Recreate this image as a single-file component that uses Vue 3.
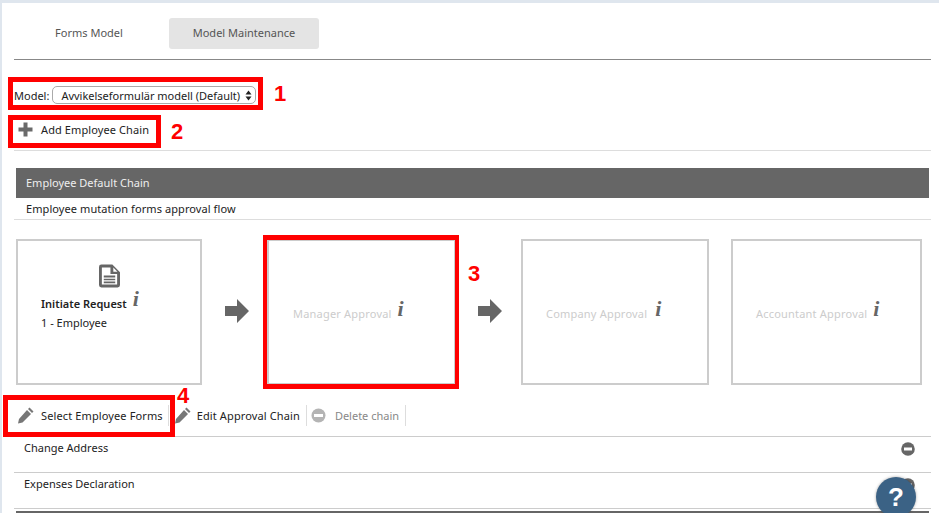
<script setup>
const cards = [
  { key: 'a', title: 'Initiate Request', sub: '1 - Employee', active: true },
  { key: 'b', title: 'Manager Approval', arrow: true },
  { key: 'c', title: 'Company Approval', arrow: true },
  { key: 'd', title: 'Accountant Approval', spacer: true }
]
const forms = ['Change Address', 'Expenses Declaration']
const marks = [
  { id: 1, box: 'box1', num: 'num1' },
  { id: 2, box: 'box2', num: 'num2' },
  { id: 3, box: 'box3', num: 'num3' },
  { id: 4, box: 'box4', num: 'num4' }
]
</script>

<template>
  <div class="page">
    <nav class="tabs">
      <a class="tab">Forms Model</a>
      <a class="tab current">Model Maintenance</a>
    </nav>

    <div class="model-row">
      <label class="model-label">Model:</label>
      <div class="select">
        <span>Avvikelseformulär modell (Default)</span>
        <svg class="updown" width="7" height="11" viewBox="0 0 7 11"><path d="M3.5 0.5 6.5 4.5H.5zM3.5 10.5 .5 6.5H6.5z" fill="#222"/></svg>
      </div>
    </div>

    <div class="add-row">
      <svg class="plus" width="15" height="15" viewBox="0 0 15 15"><path d="M5.5 0.5h4v5h5v4h-5v5h-4v-5h-5v-4h5z" fill="#6a6a6a"/></svg>
      <span>Add Employee Chain</span>
    </div>

    <section class="chain">
      <header class="chain-head">Employee Default Chain</header>
      <p class="chain-desc">Employee mutation forms approval flow</p>

      <div class="flow">
        <template v-for="c in cards" :key="c.key">
          <div v-if="c.arrow" class="arrow" :class="'arrow-' + c.key">
            <svg width="24" height="24" viewBox="0 0 24 24"><path d="M0 7h12V0l12 12-12 12v-7H0z" fill="#666"/></svg>
          </div>
          <div v-if="c.spacer" class="spacer"></div>
          <div class="card" :class="['card-' + c.key, { on: c.active }]">
            <svg v-if="c.active" class="doc" width="21" height="24" viewBox="0 0 22 24">
              <path fill-rule="evenodd" fill="#666" d="M2.5 0H14l8 8v13.500a2.500 2.500 0 0 1-2.500 2.500h-17A2.500 2.500 0 0 1 0 21.500v-19A2.500 2.500 0 0 1 2.500 0zM3 3v18h16V10H12V3zM15 3.200V7.500h4.300zM5 11.500h12v2H5zM5 14.800h12v1.700H5zM5 17.700h12v1.800H5z"/>
            </svg>
            <div class="card-text">
              <div class="card-title">
                <span>{{ c.title }}</span><i class="info">i</i>
              </div>
              <div v-if="c.sub" class="card-sub">{{ c.sub }}</div>
            </div>
          </div>
        </template>
      </div>

      <div class="tools">
        <div class="tool first">
          <svg class="pen" width="16" height="17" viewBox="0 0 16 17"><path d="M11.500 .5l4 4-1.500 1.500-4-4zM9 3l4 4-8.500 8.500L0 16.500l1-4.500z" fill="#777"/></svg>
          <span>Select Employee Forms</span>
        </div>
        <div class="tool second">
          <svg class="pen" width="16" height="17" viewBox="0 0 16 17"><path d="M11.500 .5l4 4-1.500 1.500-4-4zM9 3l4 4-8.500 8.500L0 16.500l1-4.500z" fill="#777"/></svg>
          <span>Edit Approval Chain</span>
        </div>
        <div class="tool third">
          <svg width="15" height="15" viewBox="0 0 15 15"><circle cx="7.500" cy="7.500" r="7" fill="#b4b4b4"/><rect x="3" y="6" width="9" height="3" fill="#fff"/></svg>
          <span>Delete chain</span>
        </div>
      </div>

      <ul class="forms">
        <li v-for="f in forms" :key="f">
          <span>{{ f }}</span>
          <svg width="14" height="14" viewBox="0 0 14 14"><circle cx="7" cy="7" r="6.800" fill="#666"/><rect x="3" y="5.500" width="8" height="3" fill="#fff"/></svg>
        </li>
      </ul>
      <div class="next-head"></div>
    </section>

    <div v-for="m in marks" :key="m.id">
      <div class="redbox" :class="m.box"></div>
      <b class="num" :class="m.num">{{ m.id }}</b>
    </div>

    <button class="help">?</button>
  </div>
</template>

<style>
html, body { margin: 0; background: #fff; }
</style>

<style scoped>
.page {
  position: relative;
  box-sizing: border-box;
  width: 939px;
  height: 513px;
  overflow: hidden;
  background: #fff;
  border-top: 3px solid #dfe6ee;
  border-left: 2px solid #dfe6ee;
  padding: 15px 8px 0 12px;
  font-family: "Noto Sans", "Open Sans", sans-serif;
  font-size: 11px;
  color: #222;
}
.tabs {
  display: flex;
  gap: 5px;
  height: 42px;
  box-sizing: border-box;
  border-bottom: 1px solid #888;
}
.tab {
  display: block;
  width: 150px;
  height: 31px;
  line-height: 30px;
  text-align: center;
  color: #555;
  border-radius: 3px;
}
.tab.current {
  background: #e4e4e4;
}
.model-row {
  display: flex;
  align-items: center;
  gap: 3px;
  height: 18px;
  margin-top: 26px;
}
.select {
  display: flex;
  align-items: center;
  justify-content: space-between;
  box-sizing: border-box;
  width: 204px;
  height: 18px;
  padding: 0 3px 0 8px;
  border: 1px solid #aaa;
  border-radius: 5px;
  color: #222;
}
.add-row {
  display: flex;
  align-items: center;
  gap: 8px;
  height: 32px;
  margin-top: 9px;
  padding-left: 4px;
  padding-bottom: 5px;
  border-bottom: 1px solid #ddd;
  letter-spacing: .1px;
}
.chain { margin-top: 17px; }
.chain-head {
  height: 30px;
  line-height: 30px;
  margin: 0 2px;
  padding-left: 10px;
  background: #666;
  color: #eee;
}
.chain-desc {
  margin: 0;
  height: 21px;
  line-height: 21px;
  padding-left: 12px;
  border-bottom: 1px solid #ddd;
  letter-spacing: .08px;
}
.flow {
  display: grid;
  grid-template-columns: 186px 65px 189px 65px 188px 22px 191px;
  margin: 19px 0 0 2px;
  height: 146px;
}
.arrow {
  display: flex;
  align-items: center;
  justify-content: center;
  padding-bottom: 2px;
}
.arrow-b { padding-left: 5px; }
.arrow-c { padding-left: 2px; }
.card {
  display: flex;
  flex-direction: column;
  justify-content: center;
  box-sizing: border-box;
  height: 146px;
  border: 2px solid #ccc;
  color: #ccc;
  padding-left: 24px;
  padding-bottom: 2px;
  letter-spacing: .2px;
}
.card-c, .card-d { padding-left: 23px; }
.card.on {
  align-items: stretch;
  color: #222;
  padding-left: 23px;
  padding-bottom: 30px;
  letter-spacing: 0;
}
.doc { align-self: flex-start; margin: 0 0 4px 58px; }
.card-title { display: flex; align-items: baseline; gap: 6px; }
.card-c .card-title { gap: 8px; }
.card.on .card-title { font-weight: 600; gap: 6px; }
.card-sub { margin-top: 4px; }
.info {
  font-family: "Liberation Serif", serif;
  font-style: italic;
  font-weight: 700;
  font-size: 22px;
  line-height: 18px;
  color: #666;
  position: relative;
  top: -2px;
}
.tools {
  display: flex;
  align-items: center;
  height: 21px;
  margin-top: 20px;
  padding-left: 4px;
  letter-spacing: .12px;
}
.tool {
  display: flex;
  align-items: center;
  gap: 7px;
  height: 21px;
  padding-right: 5px;
  border-right: 1px solid #ddd;
}
.tool.second { gap: 6px; padding-left: 6px; padding-right: 6px; }
.tool.third { color: #888; gap: 9px; padding-left: 4px; padding-right: 6px; letter-spacing: 0; }
.forms {
  list-style: none;
  margin: 10px 0 0;
  padding: 0;
}
.forms li {
  display: flex;
  justify-content: space-between;
  height: 35px;
  box-sizing: content-box;
  border-top: 1px solid #ccc;
  padding: 0 16px 0 10px;
  line-height: 22px;
}
.forms li svg { margin-top: 5px; }
.next-head {
  height: 20px;
  border-top: 1px solid #ccc;
  margin-top: 0;
  position: relative;
}
.next-head::after {
  content: "";
  display: block;
  height: 20px;
  margin: 2px 2px 0;
  background: #666;
}
.redbox {
  position: absolute;
  box-sizing: border-box;
  border: 5px solid #f00;
  pointer-events: none;
}
.box1 { left: 6px; top: 74px; width: 255px; height: 33px; }
.box2 { left: 6px; top: 112px; width: 153px; height: 33px; }
.box3 { left: 261px; top: 232px; width: 196px; height: 154px; border-width: 5px 4px; }
.box4 { left: 1px; top: 392px; width: 172px; height: 42px; }
.num {
  position: absolute;
  font-family: "Liberation Sans", Arial, sans-serif;
  font-size: 22px;
  line-height: 22px;
  font-weight: 700;
  color: #f00;
}
.num1 { left: 272px; top: 80px; }
.num2 { left: 169px; top: 118px; }
.num3 { left: 466px; top: 260px; }
.num4 { left: 175px; top: 382px; }
.help {
  position: absolute;
  left: 874px;
  top: 474px;
  width: 40px;
  height: 40px;
  padding: 0;
  border: 0;
  border-radius: 50%;
  background: #3b6285;
  color: #fff;
  font-family: "Liberation Sans", Arial, sans-serif;
  font-size: 26px;
  font-weight: 700;
  line-height: 40px;
  box-shadow: 0 0 3px rgba(0, 0, 0, .35);
}
</style>
